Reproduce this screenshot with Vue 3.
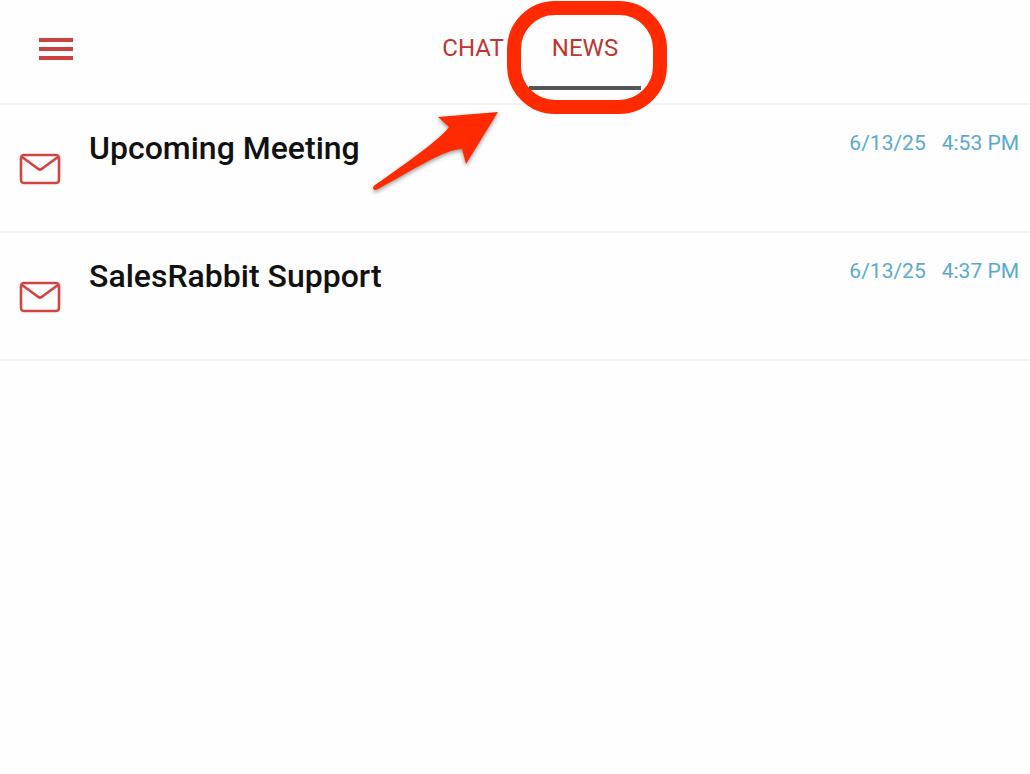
<script setup>
import { ref } from 'vue'

const tabs = ['CHAT', 'NEWS']
const active = ref('NEWS')
const messages = [
  { title: 'Upcoming Meeting', date: '6/13/25', time: '4:53 PM' },
  { title: 'SalesRabbit Support', date: '6/13/25', time: '4:37 PM' },
]
</script>

<template>
  <div class="page">
    <header class="header">
      <button class="menu" type="button" aria-label="Menu">
        <svg width="34" height="24" viewBox="0 0 34 24" aria-hidden="true">
          <path d="M0 3H34M0 12H34M0 21H34" stroke="#c9423f" stroke-width="4" />
        </svg>
      </button>
      <nav class="tabs">
        <button
          v-for="tab in tabs"
          :key="tab"
          type="button"
          class="tab"
          :class="{ active: active === tab }"
          @click="active = tab"
        >
          {{ tab }}
        </button>
        <span class="ring"></span>
        <svg class="arrow" width="140" height="90" viewBox="0 0 140 90" aria-hidden="true">
          <path
            d="M133 7L73 12L84 22C78 31 56 48 10 80C6 83 9 87 13 84C50 64 80 44 97 44L101 59Z"
            fill="#ff2a00"
          />
        </svg>
      </nav>
    </header>

    <main>
      <ul class="list">
        <li v-for="message in messages" :key="message.title" class="row">
          <svg class="mail" width="42" height="32" viewBox="0 0 42 32" fill="none" stroke="#d04541" stroke-width="2.6" aria-hidden="true">
            <rect x="2" y="2" width="38" height="28" rx="3" />
            <path d="M3 4L18 15Q21 18 24 15L39 4" />
          </svg>
          <h2 class="title">{{ message.title }}</h2>
          <p class="stamp">
            <span>{{ message.date }}</span>
            <span>{{ message.time }}</span>
          </p>
        </li>
      </ul>
    </main>
  </div>
</template>

<style>
body {
  margin: 0;
  background: #fefefe;
}
</style>

<style scoped>
.page {
  font-family: Roboto, "Liberation Sans", sans-serif;
  color: #111;
}
.header {
  display: grid;
  grid-template-columns: 1fr auto 1fr;
  height: 103px;
  border-bottom: 2px solid #f3f3f3;
}
button {
  border: 0;
  padding: 0;
  background: none;
  font-family: inherit;
  cursor: pointer;
}
.menu {
  display: flex;
  align-items: center;
  justify-self: start;
  height: 97px;
  padding-left: 39px;
}
.tabs {
  position: relative;
  display: flex;
  padding-left: 28px;
}
.tab {
  width: 112px;
  height: 90px;
  padding-top: 10px;
  border-bottom: 4px solid transparent;
  color: #bd3631;
  font-size: 24px;
  line-height: 28px;
}
.tab.active {
  border-bottom-color: #535556;
}
.ring {
  position: absolute;
  top: 1px;
  right: -26px;
  box-sizing: border-box;
  width: 160px;
  height: 113px;
  border: 14px solid #ff2a00;
  border-radius: 48px;
  pointer-events: none;
}
.arrow {
  position: absolute;
  top: 105px;
  right: 136px;
  filter: drop-shadow(0 2px 2px rgba(0, 0, 0, 0.4));
  pointer-events: none;
}
.list {
  margin: 0;
  padding: 0;
  list-style: none;
}
.row {
  display: flex;
  align-items: flex-start;
  box-sizing: border-box;
  min-height: 128px;
  padding: 24px 11px 24px 19px;
  border-bottom: 2px solid #f1f2f2;
}
.mail {
  flex: none;
  margin-top: 24px;
}
.title {
  flex: 1;
  margin: 0 16px 0 28px;
  font-size: 32px;
  font-weight: 500;
  line-height: 38px;
}
.stamp {
  display: flex;
  gap: 16px;
  margin: 0;
  color: #58a9d2;
  font-size: 21px;
  line-height: 28px;
}
</style>
